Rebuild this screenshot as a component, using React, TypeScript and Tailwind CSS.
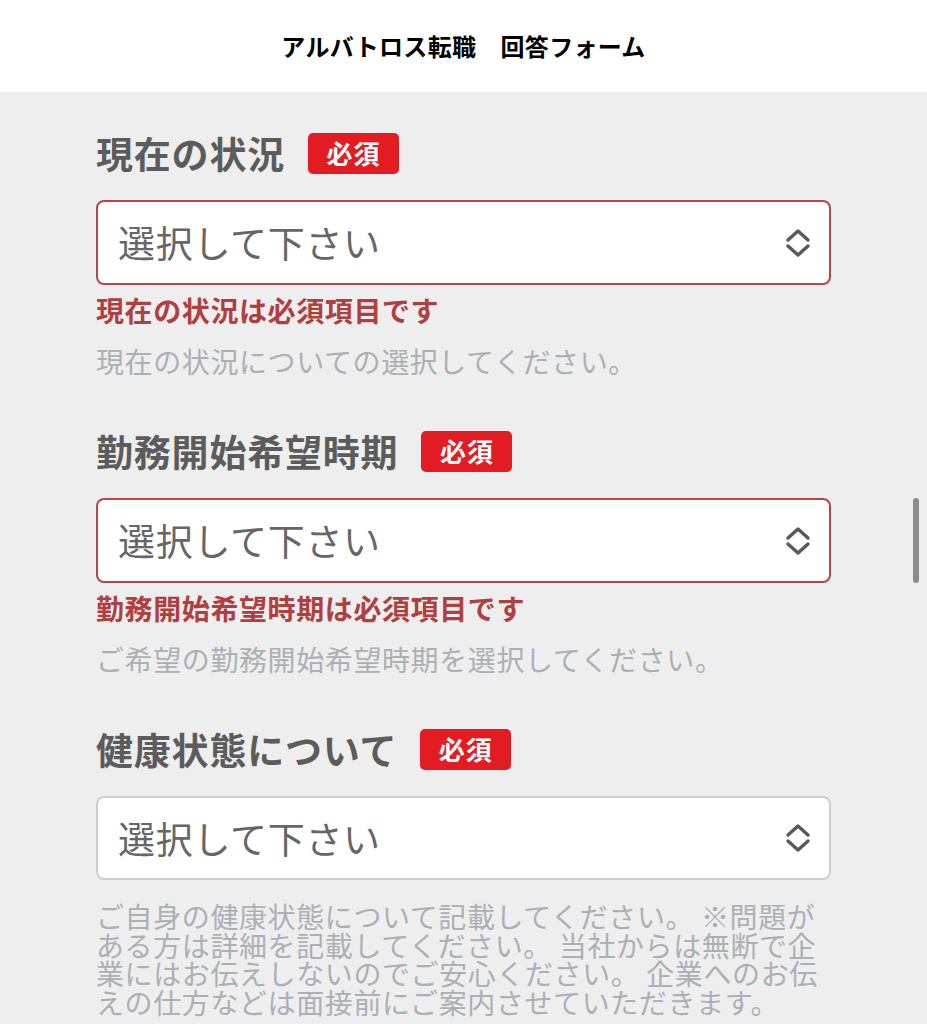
import React from "react"

const font = { fontFamily: '"Noto Sans CJK JP", "Noto Sans", sans-serif' }

function UpDownIcon() {
  return (
    <svg width="26" height="32" viewBox="0 0 26 32" fill="none" className="shrink-0">
      <path d="M3 13 L13 4 L23 13" stroke="#595959" strokeWidth="3.4" strokeLinecap="round" strokeLinejoin="round" />
      <path d="M3 19 L13 28 L23 19" stroke="#595959" strokeWidth="3.4" strokeLinecap="round" strokeLinejoin="round" />
    </svg>
  )
}

interface FieldProps {
  label: string
  error?: string
  help: React.ReactNode
}

function SelectField({ label, error, help }: FieldProps) {
  return (
    <section>
      <div className="flex h-[48px] items-center gap-[23px]">
        <h2 className="text-[37px] font-bold leading-[48px] tracking-[0.8px] text-[#5c5c5c]">{label}</h2>
        <span className="flex h-[41px] w-[91px] items-center justify-center rounded-[5px] bg-[#e31b23] text-[26px] font-bold leading-none tracking-[1px] text-white">
          必須
        </span>
      </div>

      <div
        className={
          error
            ? "mt-[23px] flex h-[85px] items-center justify-between rounded-[8px] border-2 border-[#b84645] bg-white pl-[20px] pr-[18px]"
            : "mt-[23px] flex h-[84px] items-center justify-between rounded-[8px] border-2 border-[#cdd0d3] bg-white pl-[20px] pr-[18px]"
        }
      >
        <span className="text-[37px] leading-none tracking-[0.7px] text-[#666666]">選択して下さい</span>
        <UpDownIcon />
      </div>

      {error && (
        <p className="mt-[7px] text-[28px] font-bold leading-[36px] tracking-[0.6px] text-[#b0403f]">{error}</p>
      )}

      <p
        className={
          error
            ? "mt-[15px] text-[28px] leading-[36px] tracking-[0.6px] text-[#abb0b5]"
            : "mt-[22px] text-[28px] leading-[28.5px] tracking-[0.6px] text-[#abb0b5]"
        }
      >
        {help}
      </p>
    </section>
  )
}

export default function App() {
  return (
    <div className="relative min-h-screen bg-[#eeeeee]" style={font}>
      <header className="flex h-[92px] items-center justify-center bg-white">
        <h1 className="text-[24px] font-bold tracking-[0.3px] text-black">アルバトロス転職　回答フォーム</h1>
      </header>

      <main className="flex flex-col gap-[48px] px-[96px] pt-[37px] pb-[60px]">
        <SelectField
          label="現在の状況"
          error="現在の状況は必須項目です"
          help="現在の状況についての選択してください。"
        />
        <SelectField
          label="勤務開始希望時期"
          error="勤務開始希望時期は必須項目です"
          help="ご希望の勤務開始希望時期を選択してください。"
        />
        <SelectField
          label="健康状態について"
          help="ご自身の健康状態について記載してください。 ※問題がある方は詳細を記載してください。 当社からは無断で企業にはお伝えしないのでご安心ください。 企業へのお伝えの仕方などは面接前にご案内させていただきます。"
        />
      </main>

      {/* scroll indicator */}
      <div className="absolute right-[8px] top-[498px] h-[85px] w-[6px] rounded-full bg-[#8c8c8c]" />
    </div>
  )
}
